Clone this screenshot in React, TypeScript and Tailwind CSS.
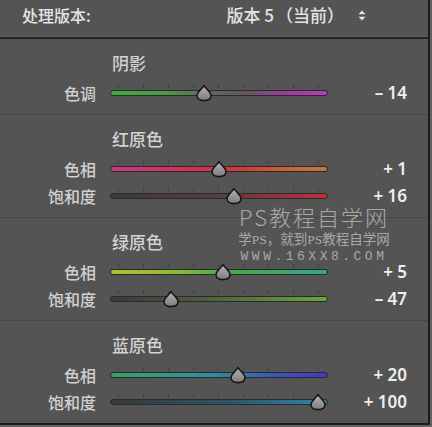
import React from "react";

type Slider = {
    label: string;
    value: number;
    track: string;
};

type Section = {
    title: string;
    sliders: Slider[];
};

const sections: Section[] = [
    {
        title: "阴影",
        sliders: [
            {
                label: "色调",
                value: -14,
                track: "bg-[linear-gradient(to_right,#3cae3c,#4a9a48_25%,#5c6a5c_45%,#5e5a5e_62%,#a238a8_82%,#b83cbc)]",
            },
        ],
    },
    {
        title: "红原色",
        sliders: [
            {
                label: "色相",
                value: 1,
                track: "bg-[linear-gradient(to_right,#c8388a,#d6304e_40%,#d03a3a_60%,#c86a34_85%,#c07a38)]",
            },
            {
                label: "饱和度",
                value: 16,
                track: "bg-[linear-gradient(to_right,#3a3a3a,#5a3c3e_50%,#c22e3c)]",
            },
        ],
    },
    {
        title: "绿原色",
        sliders: [
            {
                label: "色相",
                value: 5,
                track: "bg-[linear-gradient(to_right,#b4c02e,#8cba38_30%,#48a848_55%,#2ea88a)]",
            },
            {
                label: "饱和度",
                value: -47,
                track: "bg-[linear-gradient(to_right,#3a3a3a,#50663c_50%,#6aa83a)]",
            },
        ],
    },
    {
        title: "蓝原色",
        sliders: [
            {
                label: "色相",
                value: 20,
                track: "bg-[linear-gradient(to_right,#2ea864,#2e90a0_45%,#3a58b8_75%,#4a34c4)]",
            },
            {
                label: "饱和度",
                value: 100,
                track: "bg-[linear-gradient(to_right,#383838,#2e5468_55%,#2e86ac)]",
            },
        ],
    },
];

const ticks = [8, 33, 58, 83, 108, 133, 158, 183, 208];

function formatValue(v: number) {
    if (v < 0) return `– ${Math.abs(v)}`;
    return `+ ${v}`;
}

function Thumb() {
    return (
        <svg width="18" height="18" viewBox="0 0 18 18">
            <defs>
                <linearGradient id="thumbFill" x1="0" y1="0" x2="0" y2="1">
                    <stop offset="0" stopColor="#b4b4b4" />
                    <stop offset="1" stopColor="#7c7c7c" />
                </linearGradient>
            </defs>
            <path
                d="M9 1.5 C10 4 16 8 16 11.5 C16 15 13 16.6 9 16.6 C5 16.6 2 15 2 11.5 C2 8 8 4 9 1.5 Z"
                fill="url(#thumbFill)"
                stroke="#161616"
                strokeWidth="1.6"
                strokeLinejoin="round"
            />
        </svg>
    );
}

function SliderRow({ slider }: { slider: Slider }) {
    return (
        <div className="flex h-[27px] items-center">
            <div className="w-[96px] text-right text-[16px] font-medium leading-[20px] text-[#d0d0d0]">{slider.label}</div>
            <div className="relative ml-[14px] h-[27px] w-[218px]">
                {ticks.map((t) => (
                    <div key={t} className="absolute top-[6px] h-[3px] w-px bg-[#3e3e3e]" style={{ left: t }} />
                ))}
                <div className={`absolute left-0 right-0 top-[11px] h-[6px] rounded-full border border-[#2a2a2a] ${slider.track}`} />
                <div className="absolute top-[5px]" style={{ left: 108 + slider.value - 9 }}>
                    <Thumb />
                </div>
            </div>
            <div className="w-[80px] pr-[1px] text-right font-['Noto_Sans',sans-serif] text-[17px] font-semibold leading-[16px] text-[#eeeeee]">
                {formatValue(slider.value)}
            </div>
        </div>
    );
}

export default function App() {
    return (
        <div className="h-[427px] w-[432px] overflow-hidden bg-[#626262] font-['Noto_Sans_CJK_SC',sans-serif]">
            <div className="relative h-[425px] w-[430px] border-b-2 border-r-2 border-[#1c1c1c] bg-[#545454]">
                <div className="flex h-[39px] items-start border-b-2 border-[#222222] pt-[5px]">
                    <div className="h-[32px] w-full border-b border-[#5e5e5e]">
                        <div className="flex items-center">
                            <span className="pl-[22px] text-[16px] font-medium leading-[20px] text-[#e4e4e4]">处理版本:</span>
                            <span className="ml-auto text-[17px] font-medium leading-[20px] text-[#e4e4e4]">
                                版本 5<span className="ml-[2px]">（当前）</span>
                            </span>
                            <svg width="8" height="11" viewBox="0 0 8 11" className="ml-[14px] mr-[62px]">
                                <path d="M4 0.5 L7.5 4.2 L0.5 4.2 Z" fill="#e4e4e4" />
                                <path d="M4 10.5 L7.5 6.8 L0.5 6.8 Z" fill="#e4e4e4" />
                            </svg>
                        </div>
                    </div>
                </div>

                {sections.map((section, i) => (
                    <div
                        key={section.title}
                        className={`pb-[8px] pt-[14px] ${i < sections.length - 1 ? "border-b border-[#474747]" : ""}`}
                    >
                        <div className="pl-[112px] text-[17px] font-medium leading-[20px] text-[#d2d2d2]">{section.title}</div>
                        <div className="mt-[6px]">
                            {section.sliders.map((s) => (
                                <SliderRow key={s.label} slider={s} />
                            ))}
                        </div>
                    </div>
                ))}

                {/* watermark */}
                <div className="pointer-events-none absolute left-[226px] top-[206px] flex w-[176px] flex-col items-center whitespace-nowrap text-[rgba(225,225,225,0.6)]">
                    <div className="text-[22px] font-light leading-[20px] tracking-[2px]">PS教程自学网</div>
                    <div className="mt-[6px] font-['Liberation_Serif','Noto_Sans_CJK_SC',serif] text-[13.5px] leading-[15px]">学PS，就到PS教程自学网</div>
                    <div className="mt-[2px] font-['Liberation_Mono',monospace] text-[13px] leading-[15px] tracking-[3.5px]">WWW.16XX8.COM</div>
                </div>
            </div>
        </div>
    );
}
